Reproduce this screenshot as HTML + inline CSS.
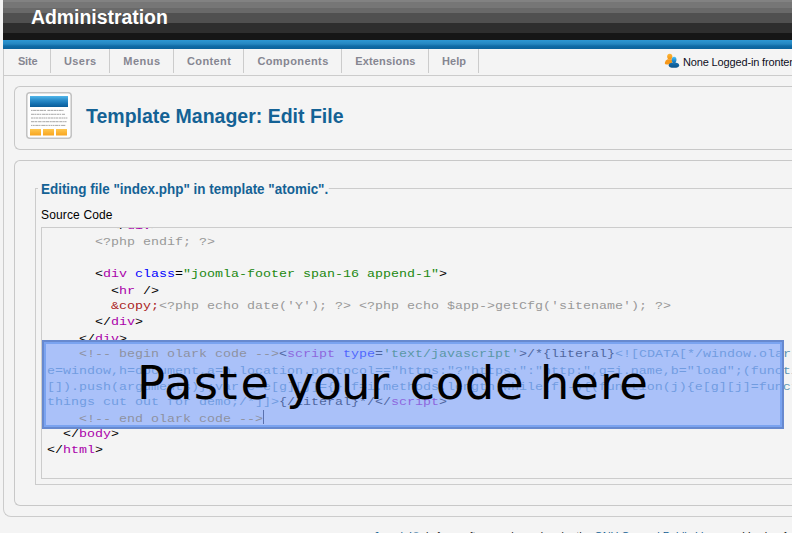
<!DOCTYPE html>
<html>
<head>
<meta charset="utf-8">
<title>Administration</title>
<style>
html,body{margin:0;padding:0;}
body{width:792px;height:533px;overflow:hidden;background:#f4f4f4;position:relative;font-family:"Liberation Sans",Arial,sans-serif;font-size:11px;color:#222;}
.abs{position:absolute;}
#hdr{left:3px;top:0;width:789px;height:49px;background:linear-gradient(to bottom,#828282 0,#828282 2px,#767676 2px,#767676 8px,#696969 8px,#696969 13px,#505050 13px,#505050 23px,#2e2e2e 23px,#2e2e2e 33px,#161616 33px,#161616 40px,#2d97d3 40px,#2586c0 44px,#0f6ba6 46px,#0c629b 49px);}
#hdr h1{position:absolute;left:28px;top:5px;margin:0;font-size:19.4px;line-height:24px;font-weight:bold;color:#fff;white-space:nowrap;}
#wrap{left:3px;top:49px;width:900px;height:468px;border-left:1px solid #ccc;border-bottom:1px solid #ccc;border-radius:0 0 0 8px;box-sizing:border-box;}
#menu{left:4px;top:49px;width:788px;height:26px;border-bottom:1px solid #ccc;}
#menu span.m{position:absolute;top:0;height:24px;font-weight:bold;font-size:11px;line-height:24px;color:#868691;white-space:nowrap;}
#menu i.sep{position:absolute;top:0;width:1px;height:24px;background:#ccc;}
#status{left:683px;top:55px;font-size:11px;line-height:14px;color:#0e0e1c;white-space:nowrap;letter-spacing:-0.15px;}
.panel{border:1px solid #c8c8c8;border-radius:6px 0 0 6px;border-right:none;box-sizing:border-box;}
#p1{left:14px;top:86px;width:800px;height:64px;}
#p2{left:14px;top:160px;width:800px;height:346px;}
#title{left:86px;top:104px;font-size:19.5px;line-height:24px;font-weight:bold;color:#146295;white-space:nowrap;margin:0;}
#fs{left:35px;top:188px;width:800px;height:297px;border:1px solid #ccc;border-right:none;box-sizing:border-box;}
#legend{left:38px;top:181px;padding:0 0.5px 0 3px;background:#f4f4f4;font-size:13.75px;transform-origin:0 0;transform:scaleX(0.979);line-height:17px;font-weight:bold;color:#146295;white-space:nowrap;}
#lbl{left:41px;top:208px;font-size:12px;line-height:14px;color:#000;white-space:nowrap;letter-spacing:0.15px;}
#ta{left:41px;top:227px;width:800px;height:252px;border:1px solid #ccc;border-right:none;box-sizing:border-box;overflow:hidden;}
#code{position:absolute;left:5px;top:-9px;margin:0;transform-origin:0 0;transform:scaleY(0.87);font-family:"Liberation Mono","Courier New",monospace;font-size:13.33px;line-height:18.3908px;color:#000;white-space:pre;}
.t{color:#a0a;} .a{color:#00f;} .s{color:#281;} .p{color:#999;} .e{color:#a22;} .c{color:#a70;} .d{color:#5f94b4;}
#ov{left:42px;top:340px;width:742px;height:89px;box-sizing:border-box;border:2px solid #6789cf;box-shadow:inset 0 0 0 2px #7aa3f0;background:rgba(125,162,252,0.62);}
#cur{left:263px;top:410px;width:1px;height:14px;background:#223;}
#big{left:137px;top:353px;font-family:"DejaVu Sans",sans-serif;font-size:46.6px;line-height:60px;color:#000;white-space:nowrap;letter-spacing:1.1px;}
#foot{left:373.5px;top:529px;font-size:11px;line-height:14px;color:#222;white-space:nowrap;}
#foot a{color:#146295;text-decoration:none;}
</style>
</head>
<body>
<div id="hdr" class="abs"><h1>Administration</h1></div>
<div id="wrap" class="abs"></div>
<div id="menu" class="abs">
<i class="sep" style="left:46px"></i><i class="sep" style="left:105px"></i><i class="sep" style="left:169px"></i><i class="sep" style="left:239px"></i><i class="sep" style="left:337px"></i><i class="sep" style="left:424px"></i><i class="sep" style="left:474px"></i>
<span class="m" style="left:13.9px;letter-spacing:-0.15px">Site</span>
<span class="m" style="left:59.9px;letter-spacing:0.44px">Users</span>
<span class="m" style="left:119.3px;letter-spacing:0.50px">Menus</span>
<span class="m" style="left:183.0px;letter-spacing:0.39px">Content</span>
<span class="m" style="left:253.4px;letter-spacing:0.41px">Components</span>
<span class="m" style="left:351.2px;letter-spacing:0.17px">Extensions</span>
<span class="m" style="left:438.0px;letter-spacing:0.05px">Help</span>
</div>
<svg class="abs" style="left:664px;top:53px" width="16" height="16" viewBox="0 0 16 16">
<defs>
<linearGradient id="uo" x1="0" y1="0" x2="0" y2="1"><stop offset="0" stop-color="#fdb737"/><stop offset="1" stop-color="#f49413"/></linearGradient>
<linearGradient id="ub" x1="0" y1="0" x2="0" y2="1"><stop offset="0" stop-color="#4cc4fb"/><stop offset="0.6" stop-color="#2390d2"/><stop offset="1" stop-color="#1672b3"/></linearGradient>
<linearGradient id="ud" x1="0" y1="0" x2="0" y2="1"><stop offset="0" stop-color="#176eab"/><stop offset="1" stop-color="#0b548d"/></linearGradient>
</defs>
<ellipse cx="5.75" cy="3.6" rx="2.6" ry="2.95" fill="url(#uo)"/>
<path d="M3.6 6.2 L7.9 6.2 L8.2 11 Q5 12 1.4 11.3 Q0.6 11 0.9 9.6 Q1.3 7.2 3.6 6.2 Z" fill="#f6981a"/>
<ellipse cx="9.95" cy="12.2" rx="5.2" ry="2.6" fill="url(#ud)"/>
<rect x="8.6" y="8.5" width="2.9" height="2.2" fill="#1a78b8"/>
<ellipse cx="10.1" cy="6.8" rx="2.35" ry="2.95" fill="url(#ub)"/>
</svg>
<div id="status" class="abs">None Logged-in frontend</div>
<div id="p1" class="abs panel"></div>
<svg class="abs" style="left:26px;top:92px" width="46" height="47" viewBox="0 0 46 47">
<defs>
<linearGradient id="gb" x1="0" y1="0" x2="0" y2="1"><stop offset="0" stop-color="#52b7ea"/><stop offset="0.35" stop-color="#2d8fcc"/><stop offset="0.7" stop-color="#1572b2"/><stop offset="1" stop-color="#0a5c98"/></linearGradient>
<linearGradient id="go" x1="0" y1="0" x2="0" y2="1"><stop offset="0" stop-color="#ffc74f"/><stop offset="1" stop-color="#f8a51f"/></linearGradient>
</defs>
<rect x="0.75" y="0.75" width="44.5" height="45.5" rx="3" ry="3" fill="#fefefe" stroke="#c3c3c3" stroke-width="1.6"/>
<rect x="4" y="4" width="38" height="11" fill="url(#gb)"/>
<g stroke="#9c9c9c" stroke-width="0.9" fill="none">
<line x1="5" y1="18.4" x2="37.5" y2="18.4" stroke-dasharray="1.6 0.5 3.2 0.4 2.4 0.5 4 0.4 2 1.4 3 0.4 2.6 0.5 2.2 0.4"/>
<line x1="5" y1="22.3" x2="39" y2="22.3" stroke-dasharray="3 0.4 2 0.5 2.6 0.4 1.4 0.8 3.4 0.4 2.2 0.5 1.8 0.4"/>
<line x1="5" y1="26" x2="41.5" y2="26" stroke-dasharray="2.2 0.4 1.4 0.4 3 0.6 2.4 0.4 1.2 0.4 2 0.4 1.6 0.6 2.6 0.4"/>
<line x1="5" y1="29.7" x2="40.5" y2="29.7" stroke-dasharray="3.4 0.4 2.6 0.7 3 0.4 1.2 0.4 2.2 0.4 3.6 0.5 2 0.4"/>
<line x1="5" y1="33.4" x2="39.5" y2="33.4" stroke-dasharray="1.2 0.5 2 0.6 3.4 0.4 1.4 0.8 4.2 0.4 1 0.4 1 0.4 1.6 0.5"/>
</g>
<rect x="4" y="37" width="11" height="6.5" fill="url(#go)"/>
<rect x="17" y="37" width="11" height="6.5" fill="url(#go)"/>
<rect x="30" y="37" width="11" height="6.5" fill="url(#go)"/>
</svg>
<h2 id="title" class="abs">Template Manager: Edit File</h2>
<div id="p2" class="abs panel"></div>
<div id="fs" class="abs"></div>
<div id="legend" class="abs">Editing file "index.php" in template "atomic".</div>
<div id="lbl" class="abs">Source Code</div>
<div id="ta" class="abs"><pre id="code">        &lt;/<span class="t">div</span>&gt;
      <span class="p">&lt;?php endif; ?&gt;</span>

      &lt;<span class="t">div</span> <span class="a">class</span>=<span class="s">"joomla-footer span-16 append-1"</span>&gt;
        &lt;<span class="t">hr</span> /&gt;
        <span class="e">&amp;copy;</span><span class="p">&lt;?php echo date('Y'); ?&gt; &lt;?php echo $app-&gt;getCfg('sitename'); ?&gt;</span>
      &lt;/<span class="t">div</span>&gt;
    &lt;/<span class="t">div</span>&gt;
    <span class="c">&lt;!-- begin olark code --&gt;</span>&lt;<span class="t">script</span> <span class="a">type</span>=<span class="s">'text/javascript'</span>&gt;/*{literal}<span class="d">&lt;![CDATA[*/window.olark||(function(k){var g=window,j=document</span>
<span class="d">e=window,h=document,a=h.location.protocol=="https:"?"https:":"http:",g=i.name,b="load";(function(){</span>
<span class="d">[]).push(arguments)};var c=e[g][j]={},f=i.methods.length;while(f--){(function(j){e[g][j]=function(){</span>
<span class="d">things cut out for demo;/*]]&gt;</span>{/literal}*/&lt;/<span class="t">script</span>&gt;
    <span class="c">&lt;!-- end olark code --&gt;</span>
  &lt;/<span class="t">body</span>&gt;
&lt;/<span class="t">html</span>&gt;</pre></div>
<div id="cur" class="abs"></div>
<div id="ov" class="abs"></div>
<div id="big" class="abs">Past<span style="margin-left:2px;margin-right:-2px">e</span> <span style="letter-spacing:-0.6px;margin-left:2px;margin-right:5px;">your</span> <span style="letter-spacing:0.6px">code </span>here</div>
<div id="foot" class="abs"><a style="margin-right:3px">Joomla!®</a><span style="letter-spacing:-0.12px"> is free software released under the </span><a style="letter-spacing:-0.1px">GNU General Public License</a>. &nbsp;<span style="margin-left:1.3px">Version 1.6.0</span></div>
</body>
</html>
